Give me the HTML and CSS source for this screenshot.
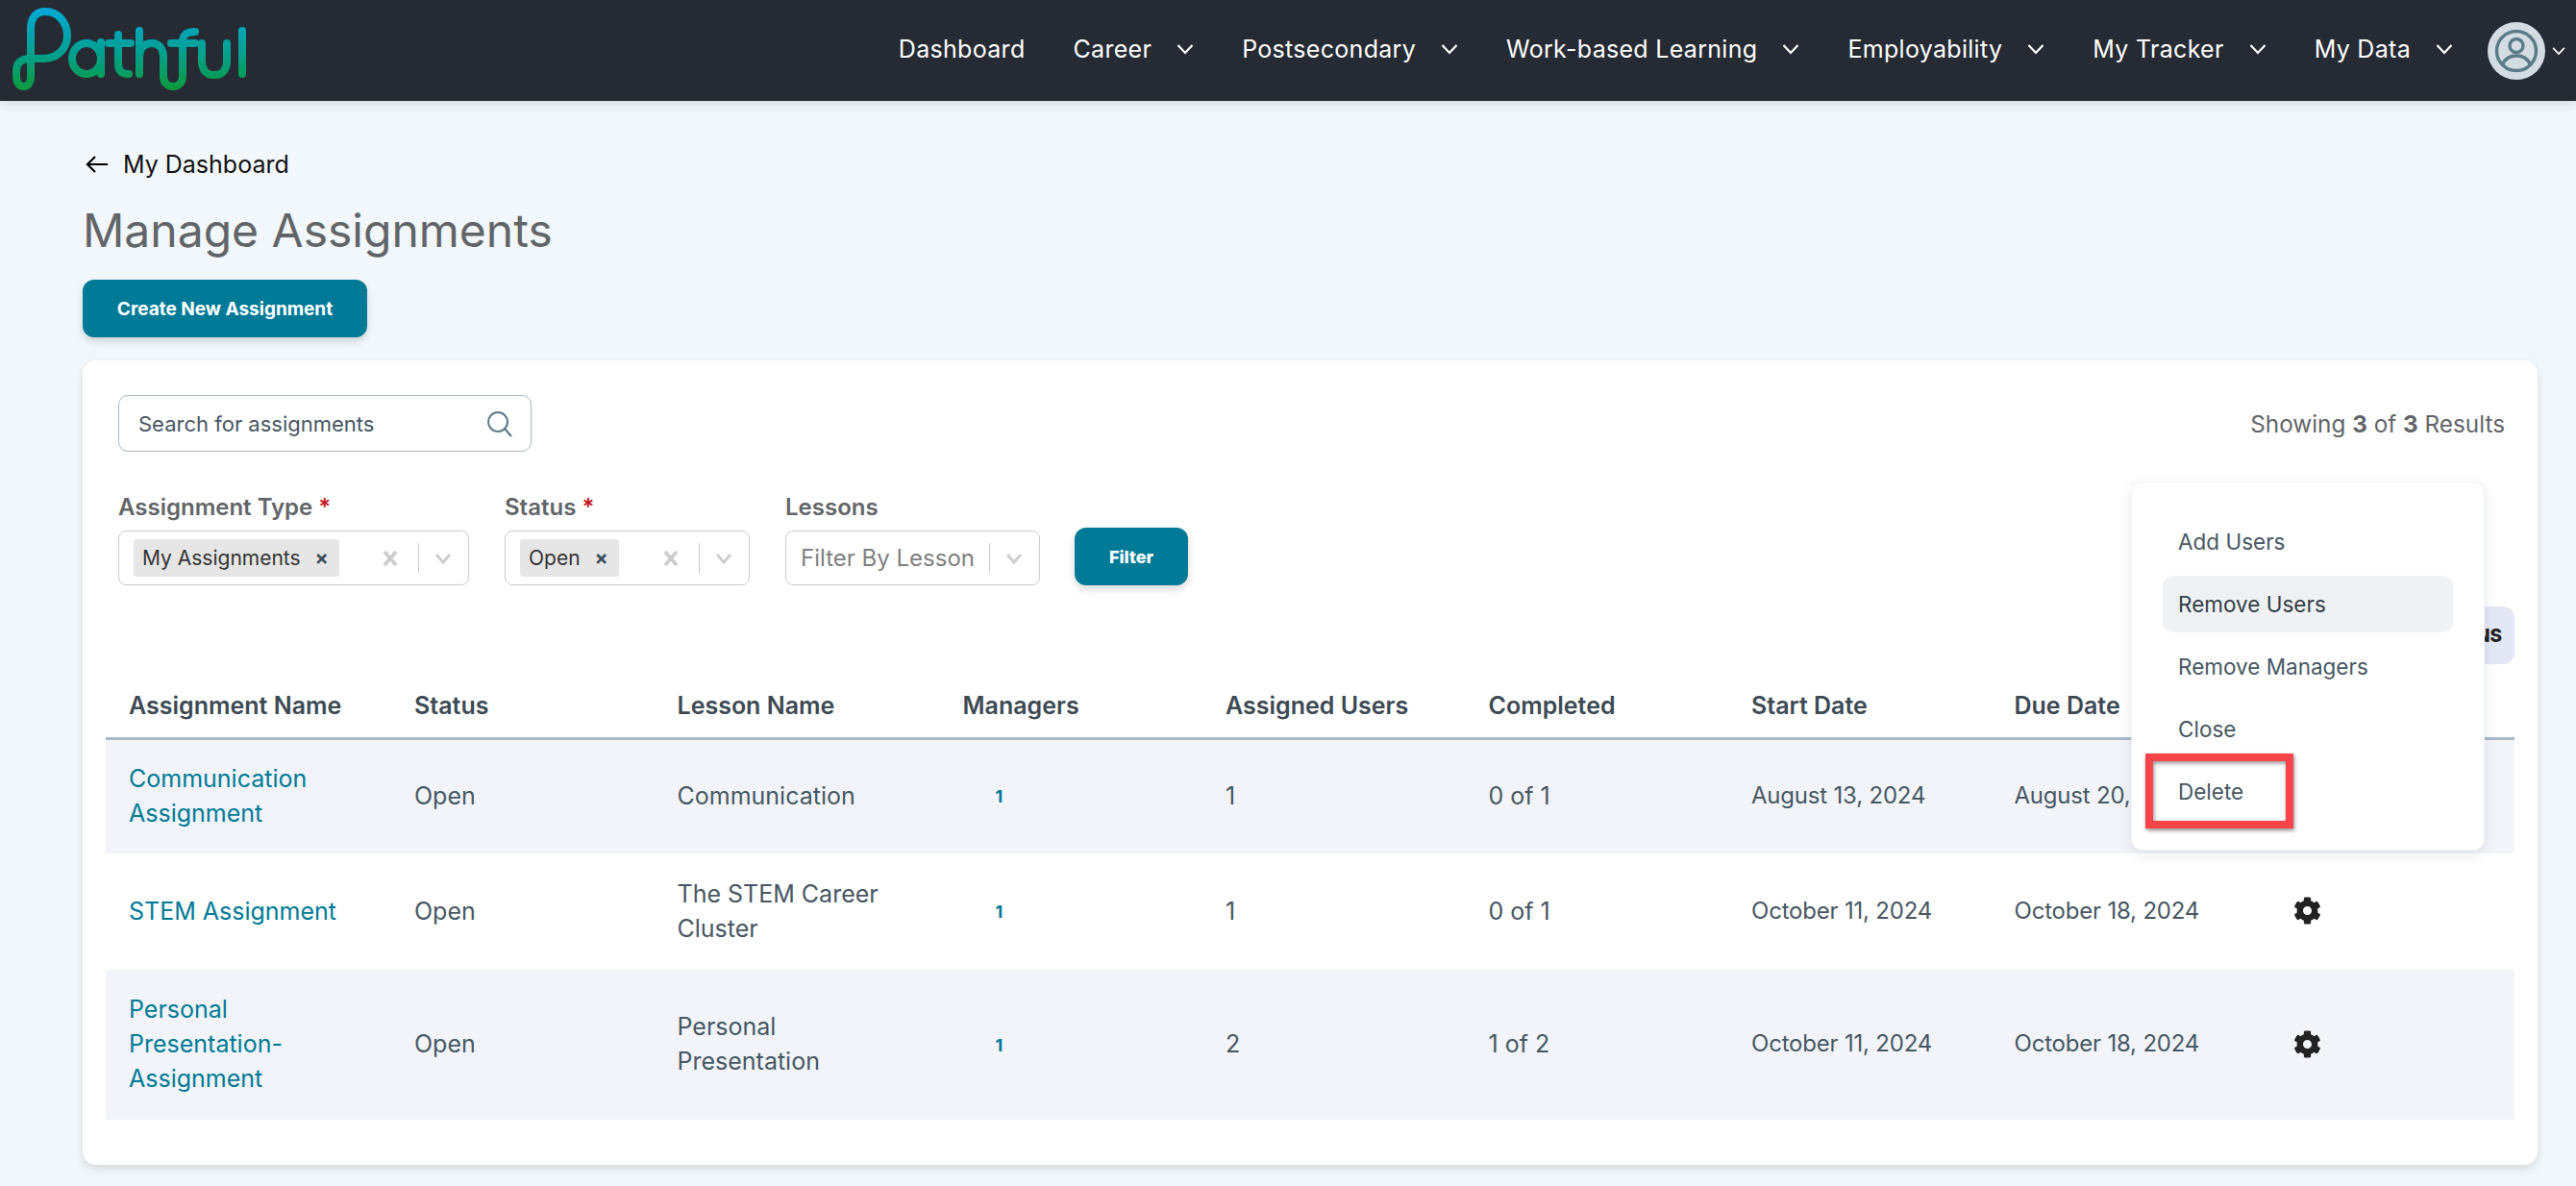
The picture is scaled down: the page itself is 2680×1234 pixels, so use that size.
FILE: index.html
```html
<!DOCTYPE html>
<html lang="en">
<head>
  <meta charset="UTF-8">
  <meta name="viewport" content="width=device-width, initial-scale=1.0">
  <title>Manage Assignments</title>
  <link rel="stylesheet" href="styles.css">
</head>
<body>
  <svg class="sprites" width="0" height="0">
    <defs>
      <linearGradient id="logoGrad" gradientUnits="userSpaceOnUse" x1="0" y1="9" x2="0" y2="93">
        <stop offset="0" stop-color="#00a9d6"/>
        <stop offset="0.55" stop-color="#00a08f"/>
        <stop offset="1" stop-color="#0b9a3e"/>
      </linearGradient>
      <symbol id="chev" viewBox="0 0 18 12"><path d="M1.5 2 9 10l7.500-8" fill="none" stroke="currentColor" stroke-width="2.200"/></symbol>
      <symbol id="gear" viewBox="0 0 512 512"><path fill="currentColor" d="M487.4 315.700l-42.600-24.600c4.300-23.200 4.300-47 0-70.200l42.600-24.600c4.900-2.800 7.100-8.600 5.500-14-11.100-35.600-30-67.800-54.700-94.600-3.800-4.100-10-5.100-14.800-2.300L380.800 110c-17.900-15.400-38.500-27.300-60.800-35.100V25.800c0-5.600-3.900-10.500-9.400-11.700-36.700-8.200-74.300-7.800-109.200 0-5.500 1.200-9.400 6.100-9.400 11.700V75c-22.200 7.900-42.800 19.800-60.800 35.100L88.700 85.500c-4.900-2.800-11-1.900-14.800 2.300-24.700 26.700-43.600 58.900-54.700 94.600-1.700 5.400.6 11.200 5.500 14L67.300 221c-4.300 23.200-4.300 47 0 70.200l-42.600 24.600c-4.900 2.800-7.100 8.600-5.500 14 11.100 35.600 30 67.800 54.700 94.600 3.800 4.100 10 5.100 14.800 2.300l42.600-24.600c17.900 15.400 38.500 27.300 60.800 35.100v49.200c0 5.600 3.900 10.500 9.400 11.700 36.700 8.200 74.300 7.800 109.200 0 5.500-1.200 9.400-6.100 9.400-11.700v-49.200c22.200-7.900 42.800-19.800 60.800-35.100l42.600 24.600c4.900 2.800 11 1.900 14.800-2.300 24.700-26.700 43.600-58.900 54.700-94.600 1.500-5.500-.7-11.300-5.600-14.100zM256 336c-44.100 0-80-35.900-80-80s35.900-80 80-80 80 35.900 80 80-35.900 80-80 80z"/></symbol>
      <symbol id="clear" viewBox="0 0 20 20"><path d="M4 3l12 14M16 3 4 17" fill="none" stroke="currentColor" stroke-width="3.600"/></symbol>
      <symbol id="drop" viewBox="0 0 20 14"><path d="M3 3l7 8 7-8" fill="none" stroke="currentColor" stroke-width="2.800"/></symbol>
    </defs>
  </svg>

  <header class="topbar">
    <svg class="logo" viewBox="0 0 270 105" width="270" height="105" role="img" aria-label="Pathful">
      <g fill="none" stroke="url(#logoGrad)" stroke-width="8" stroke-linecap="round" stroke-linejoin="round">
        <path d="M32 80V30C32 18 38 12 47 12C61 12 70 24 70 37C70 51 59 61 45 61H31C22 61 17 66 17 74V79C17 86 20 90 25 90C29 90 32 86 32 80"/>
        <ellipse cx="90" cy="61" rx="15" ry="16"/>
        <path d="M105 44V77"/>
        <path d="M123 36V66C123 73 126 77 134 77M113 45H136"/>
        <path d="M145 32V77M145 60C145 50 150 45 158 45C166 45 170 51 170 60V79C170 86 174 90 180 90C186 90 190 86 190 79V44C190 36 194 33 203 33M178 45H203"/>
        <path d="M210 45V64C210 73 215 78 223 78C231 78 236 73 236 64V45"/>
        <path d="M252 32V77"/>
      </g>
    </svg>
    <nav class="nav">
      <a class="nav-item">Dashboard</a>
      <a class="nav-item">Career <svg class="nav-chev"><use href="#chev"/></svg></a>
      <a class="nav-item">Postsecondary <svg class="nav-chev"><use href="#chev"/></svg></a>
      <a class="nav-item">Work-based Learning <svg class="nav-chev"><use href="#chev"/></svg></a>
      <a class="nav-item">Employability <svg class="nav-chev"><use href="#chev"/></svg></a>
      <a class="nav-item">My Tracker <svg class="nav-chev"><use href="#chev"/></svg></a>
      <a class="nav-item">My Data <svg class="nav-chev"><use href="#chev"/></svg></a>
    </nav>
    <div class="account">
      <div class="avatar">
        <svg viewBox="0 0 60 60" width="60" height="60" fill="none" stroke="#5a7b88" stroke-width="3.400">
          <circle cx="30" cy="30" r="20.500"/>
          <circle cx="30" cy="24.500" r="7"/>
          <path d="M15.500 44c3-6.500 8-9 14.500-9s11.500 2.500 14.500 9"/>
        </svg>
      </div>
      <svg class="account-chev"><use href="#chev"/></svg>
    </div>
  </header>

  <main class="page">
    <a class="back-link">
      <svg viewBox="0 0 24 20" width="24" height="20" fill="none" stroke="#000" stroke-width="2.200"><path d="M23 10H2M10 2l-8 8 8 8"/></svg>
      My Dashboard
    </a>
    <h1>Manage Assignments</h1>
    <button class="btn btn-create">Create New Assignment</button>

    <section class="card">
      <div class="top-row">
        <div class="search">
          <span>Search for assignments</span>
          <svg viewBox="0 0 28 28" width="28" height="28" fill="none" stroke="#5a7b88" stroke-width="2"><circle cx="12" cy="12" r="10"/><path d="M19 19l7 8"/></svg>
        </div>
        <div class="results">Showing <b>3</b> of <b>3</b> Results</div>
      </div>

      <div class="filters">
        <div class="filter filter-type">
          <label>Assignment Type <span class="req">*</span></label>
          <div class="select">
            <span class="chip">My Assignments <span class="chip-x">×</span></span>
            <svg class="sel-clear"><use href="#clear"/></svg>
            <i class="sel-sep"></i>
            <svg class="sel-drop"><use href="#drop"/></svg>
          </div>
        </div>
        <div class="filter filter-status">
          <label>Status <span class="req">*</span></label>
          <div class="select">
            <span class="chip">Open <span class="chip-x">×</span></span>
            <svg class="sel-clear"><use href="#clear"/></svg>
            <i class="sel-sep"></i>
            <svg class="sel-drop"><use href="#drop"/></svg>
          </div>
        </div>
        <div class="filter filter-lesson">
          <label>Lessons</label>
          <div class="select">
            <span class="placeholder">Filter By Lesson</span>
            <i class="sel-sep"></i>
            <svg class="sel-drop"><use href="#drop"/></svg>
          </div>
        </div>
        <button class="btn btn-filter">Filter</button>
      </div>

      <div class="actions-row">
        <button class="btn-actions">ACTIONS</button>
      </div>

      <table class="table">
        <colgroup>
          <col class="col-wide"><col class="col-std"><col class="col-wide"><col class="col-std"><col class="col-std"><col class="col-std"><col class="col-std"><col class="col-std"><col>
        </colgroup>
        <thead>
          <tr>
            <th>Assignment Name</th><th>Status</th><th>Lesson Name</th><th>Managers</th><th>Assigned Users</th><th>Completed</th><th>Start Date</th><th>Due Date</th><th></th>
          </tr>
        </thead>
        <tbody>
          <tr class="row-a">
            <td><a class="link">Communication Assignment</a></td><td>Open</td><td>Communication</td><td><span class="mgr">1</span></td><td>1</td><td>0 of 1</td><td class="date">August 13, 2024</td><td class="date">August 20, 2024</td><td class="gear-cell"><svg class="gear"><use href="#gear"/></svg></td>
          </tr>
          <tr class="row-b">
            <td><a class="link">STEM Assignment</a></td><td>Open</td><td>The STEM Career Cluster</td><td><span class="mgr">1</span></td><td>1</td><td>0 of 1</td><td class="date">October 11, 2024</td><td class="date">October 18, 2024</td><td class="gear-cell"><svg class="gear"><use href="#gear"/></svg></td>
          </tr>
          <tr class="row-c">
            <td><a class="link">Personal Presentation-Assignment</a></td><td>Open</td><td>Personal Presentation</td><td><span class="mgr">1</span></td><td>2</td><td>1 of 2</td><td class="date">October 11, 2024</td><td class="date">October 18, 2024</td><td class="gear-cell"><svg class="gear"><use href="#gear"/></svg></td>
          </tr>
        </tbody>
      </table>

      <!-- open actions menu, sits over the table -->
      <div class="menu">
        <div class="menu-item">Add Users</div>
        <div class="menu-item is-hover">Remove Users</div>
        <div class="menu-item">Remove Managers</div>
        <div class="menu-item">Close</div>
        <div class="menu-item">Delete</div>
      </div>
      <div class="callout"></div>
    </section>
  </main>
</body>
</html>
```

FILE: styles.css
```css
* {
  box-sizing: border-box;
}
body {
  margin: 0;
  background: #f2f7fb;
  font-family: Inter, "Open Sans", sans-serif;
  color: #475763;
}
.sprites {
  position: absolute;
}

/* top bar */
.topbar {
  height: 105px;
  background: #262a33;
  box-shadow: 0 3px 10px rgba(0, 0, 0, 0.12);
  display: flex;
  align-items: center;
  padding-right: 11px;
}
.logo {
  flex: none;
}
.nav {
  margin-left: auto;
  display: flex;
  align-items: center;
  gap: 50px;
  padding-bottom: 3px;
  color: #fff;
  font-size: 25px;
  letter-spacing: 0.3px;
}
.nav-item {
  display: flex;
  align-items: center;
  gap: 26px;
  white-space: nowrap;
}
.nav-chev {
  width: 18px;
  height: 12px;
}
.account {
  display: flex;
  align-items: center;
  margin-left: 36px;
  color: #fff;
}
.avatar {
  width: 60px;
  height: 60px;
  border-radius: 50%;
  background: #d3dce2;
}
.avatar svg {
  display: block;
}
.account-chev {
  width: 14px;
  height: 10px;
  margin-left: 7px;
}

/* page head */
.page {
  padding: 50px 40px 22px 86px;
}
.back-link {
  display: flex;
  align-items: center;
  gap: 15px;
  height: 32px;
  padding-left: 3px;
  color: #111;
  font-size: 25px;
}
h1 {
  margin: 22px 0 20px;
  height: 62px;
  line-height: 62px;
  font-size: 48px;
  font-weight: 400;
  color: #626568;
}
.btn {
  border: none;
  background: #007a96;
  color: #fff;
  font-family: inherit;
  font-weight: 700;
  border-radius: 12px;
  box-shadow: 0 4px 8px rgba(0, 0, 0, 0.15);
}
.btn-create {
  display: block;
  width: 296px;
  height: 60px;
  font-size: 19px;
}

/* card */
.card {
  position: relative;
  margin-top: 24px;
  height: 837px;
  background: #fff;
  border-radius: 14px;
  padding: 36px 24px 0;
  box-shadow: 0 4px 10px rgba(0, 0, 0, 0.12);
}
.top-row {
  display: flex;
  justify-content: space-between;
  align-items: center;
  padding: 0 10px 0 13px;
}
.search {
  width: 430px;
  height: 59px;
  border: 1px solid #a9bac5;
  border-radius: 10px;
  display: flex;
  align-items: center;
  justify-content: space-between;
  padding: 0 18px 0 20px;
  font-size: 22px;
  color: #475763;
}
.results {
  font-size: 24.300px;
  color: #626568;
}
.filters {
  display: flex;
  align-items: flex-end;
  margin-top: 43px;
  margin-left: 13px;
}
.filter label {
  display: block;
  font-size: 24px;
  font-weight: 600;
  color: #626568;
  margin-bottom: 10px;
}
.req {
  color: #c3191f;
}
.filter-type {
  width: 365px;
  margin-right: 37px;
}
.filter-status {
  width: 255px;
  margin-right: 37px;
}
.filter-lesson {
  width: 265px;
  margin-right: 36px;
}
.select {
  height: 57px;
  border: 1px solid #ccc;
  border-radius: 8px;
  background: #fff;
  display: flex;
  align-items: center;
  padding: 0 16px 0 15px;
}
.chip {
  height: 39px;
  background: #e6e6e6;
  border-radius: 3px;
  display: flex;
  align-items: center;
  padding: 0 11px 0 9px;
  font-size: 21px;
  color: #333;
  white-space: nowrap;
}
.chip-x {
  margin-left: 15px;
  font-weight: 700;
  color: #3d4f5c;
}
.sel-clear {
  width: 20px;
  height: 20px;
  color: #ccc;
  margin-left: auto;
}
.sel-sep {
  width: 1px;
  height: 31px;
  background: #ccc;
  margin: 0 15px 0 19px;
}
.sel-drop {
  width: 20px;
  height: 14px;
  color: #ccc;
}
.placeholder {
  font-size: 24px;
  color: #808080;
  white-space: nowrap;
  margin-right: auto;
}
.filter-lesson .sel-sep {
  margin-left: 0;
}
.btn-filter {
  width: 118px;
  height: 60px;
  font-size: 18px;
  font-weight: 800;
}
.actions-row {
  display: flex;
  justify-content: flex-end;
  margin-top: 22px;
}
.btn-actions {
  width: 136px;
  height: 60px;
  border: none;
  border-radius: 12px;
  background: #e4e7f4;
  color: #222;
  padding: 0 13px 0 0;
  text-align: right;
  font-family: inherit;
  font-size: 19px;
  font-weight: 800;
}

/* table */
.table {
  width: 100%;
  margin-top: 11px;
  table-layout: fixed;
  border-collapse: collapse;
  font-size: 25px;
}
.col-wide {
  width: 297px;
}
.col-std {
  width: 273.500px;
}
.table th {
  height: 66px;
  padding: 0 24px;
  text-align: left;
  font-weight: 600;
  color: #3d4a54;
  border-bottom: 3px solid #a9bac5;
}
.table td {
  padding: 0 24px 2px;
  line-height: 36px;
}
.table td.date {
  font-size: 24px;
  letter-spacing: -0.2px;
  white-space: nowrap;
}
.row-a {
  height: 120px;
  background: #f2f4f9;
}
.row-b {
  height: 121px;
}
.row-c {
  height: 156px;
  background: #f2f4f9;
}
.link {
  color: #007a96;
}
.mgr {
  display: inline-block;
  margin-left: 34px;
  color: #007a96;
  font-size: 18px;
  font-weight: 700;
}
.gear {
  display: block;
  width: 29px;
  height: 29px;
  color: #222;
  margin-left: 17px;
}

/* menu */
.menu {
  position: absolute;
  left: 2131px;
  top: 126px;
  width: 368px;
  height: 384px;
  background: #fff;
  border: 1px solid #f1f3f6;
  border-radius: 12px;
  padding: 32px 32px;
  box-shadow: 0 4px 14px rgba(40, 50, 80, 0.1);
}
.menu-item {
  height: 59px;
  margin-bottom: 6px;
  padding-left: 16px;
  border-radius: 10px;
  display: flex;
  align-items: center;
  font-size: 22.500px;
  color: #475763;
}
.menu-item.is-hover {
  background: #f0f1f4;
  color: #333d46;
}
.callout {
  position: absolute;
  left: 2146px;
  top: 409px;
  width: 154px;
  height: 78px;
  border: 8px solid #f94449;
  box-shadow: 1px 2px 4px rgba(0, 0, 0, 0.45), inset 1px 2px 4px rgba(0, 0, 0, 0.45);
}
```
